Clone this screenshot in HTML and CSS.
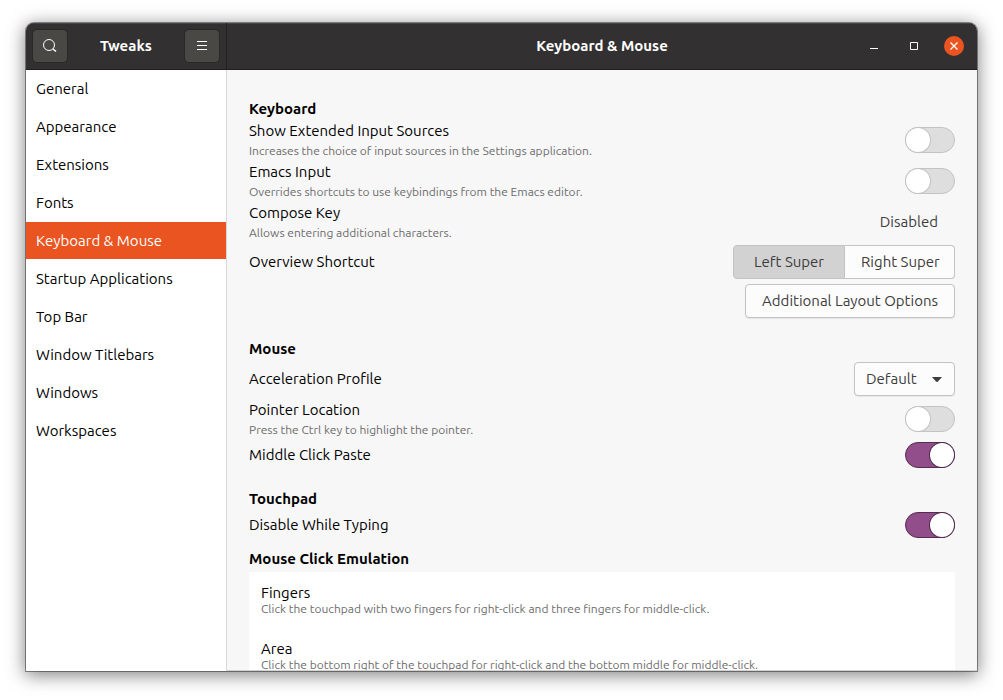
FILE: index.html
```html
<!DOCTYPE html>
<html lang="en">
<head>
<meta charset="utf-8">
<title>Tweaks</title>
<link rel="stylesheet" href="styles.css">
</head>
<body>
<div class="window">
  <header class="titlebar">
    <div class="titlebar-side">
      <button class="tool" type="button" aria-label="Search">
        <svg width="16" height="16" viewBox="0 0 16 16" fill="none" stroke="currentColor"><circle cx="7" cy="7" r="5.5"/><path d="M11 11l3 2.5" stroke-width="1.6"/></svg>
      </button>
      <h1 class="title">Tweaks</h1>
      <button class="tool" type="button" aria-label="Menu">
        <svg width="16" height="16" viewBox="0 0 16 16" fill="none" stroke="currentColor"><path d="M3 3.5h10M3 7.5h10M3 11.5h10"/></svg>
      </button>
    </div>
    <div class="titlebar-main">
      <h2 class="title">Keyboard &amp; Mouse</h2>
      <div class="window-controls">
        <button class="control" type="button" aria-label="Minimize"><svg width="20" height="20" viewBox="0 0 20 20"><path d="M6 12.5h8" stroke="#fff"/></svg></button>
        <button class="control" type="button" aria-label="Maximize"><svg width="20" height="20" viewBox="0 0 20 20"><path d="M6.5 6.5h7v7h-7z" fill="none" stroke="#fff"/></svg></button>
        <button class="control control-close" type="button" aria-label="Close"><svg width="20" height="20" viewBox="0 0 20 20"><path d="M6.5 6.5l7 7M13.5 6.5l-7 7" stroke="#fff" stroke-width="1.3"/></svg></button>
      </div>
    </div>
  </header>
  <div class="body">
    <nav class="sidebar">
      <a class="nav-item" href="#general">General</a>
      <a class="nav-item" href="#appearance">Appearance</a>
      <a class="nav-item" href="#extensions">Extensions</a>
      <a class="nav-item" href="#fonts">Fonts</a>
      <a class="nav-item nav-item-active" href="#keyboard" aria-current="page">Keyboard &amp; Mouse</a>
      <a class="nav-item" href="#startup">Startup Applications</a>
      <a class="nav-item" href="#topbar">Top Bar</a>
      <a class="nav-item" href="#titlebars">Window Titlebars</a>
      <a class="nav-item" href="#windows">Windows</a>
      <a class="nav-item" href="#workspaces">Workspaces</a>
    </nav>
    <main class="content">
      <section class="group">
        <h3 class="heading">Keyboard</h3>
        <div class="row">
          <label class="text" for="sources"><span class="name">Show Extended Input Sources</span><span class="hint">Increases the choice of input sources in the Settings application.</span></label>
          <input class="switch" type="checkbox" role="switch" id="sources">
        </div>
        <div class="row">
          <label class="text" for="emacs"><span class="name">Emacs Input</span><span class="hint">Overrides shortcuts to use keybindings from the Emacs editor.</span></label>
          <input class="switch" type="checkbox" role="switch" id="emacs">
        </div>
        <div class="row">
          <label class="text" for="compose"><span class="name">Compose Key</span><span class="hint">Allows entering additional characters.</span></label>
          <button class="button button-flat" type="button" id="compose">Disabled</button>
        </div>
        <div class="row">
          <span class="name" id="overview">Overview Shortcut</span>
          <div class="segments" role="group" aria-labelledby="overview">
            <button class="button segment segment-active" type="button" aria-pressed="true">Left Super</button>
            <button class="button segment" type="button" aria-pressed="false">Right Super</button>
          </div>
        </div>
        <div class="row row-end">
          <button class="button button-wide" type="button">Additional Layout Options</button>
        </div>
      </section>
      <section class="group">
        <h3 class="heading">Mouse</h3>
        <div class="row">
          <label class="name" for="profile">Acceleration Profile</label>
          <div class="dropdown">
            <select class="select" id="profile"><option>Default</option><option>Adaptive</option><option>Flat</option></select>
            <svg class="arrow" width="10" height="5" viewBox="0 0 10 5"><path d="M0 0h10L6 4.5Q5 5.3 4 4.5z" fill="#3d3d3d"/></svg>
          </div>
        </div>
        <div class="row">
          <label class="text" for="pointer"><span class="name">Pointer Location</span><span class="hint">Press the Ctrl key to highlight the pointer.</span></label>
          <input class="switch" type="checkbox" role="switch" id="pointer">
        </div>
        <div class="row">
          <label class="name" for="paste">Middle Click Paste</label>
          <input class="switch" type="checkbox" role="switch" id="paste" checked>
        </div>
      </section>
      <section class="group">
        <h3 class="heading">Touchpad</h3>
        <div class="row">
          <label class="name" for="typing">Disable While Typing</label>
          <input class="switch" type="checkbox" role="switch" id="typing" checked>
        </div>
        <h3 class="heading heading-list">Mouse Click Emulation</h3>
        <ul class="options">
          <li class="option"><span class="name">Fingers</span><span class="hint">Click the touchpad with two fingers for right-click and three fingers for middle-click.</span></li>
          <li class="option"><span class="name">Area</span><span class="hint">Click the bottom right of the touchpad for right-click and the bottom middle for middle-click.</span></li>
        </ul>
      </section>
    </main>
  </div>
</div>
</body>
</html>
```
FILE: styles.css
```css
* { box-sizing: border-box; }

body {
  margin: 0;
  height: 100vh;
  padding: 23px 26px 29px;
  background: #fff;
  color: #000;
  font: 15px/18px Ubuntu, "Noto Sans", sans-serif;
  overflow: hidden;
}

h1, h2, h3, ul { margin: 0; padding: 0; }
button, select, input { margin: 0; font: inherit; color: inherit; }

.window {
  display: flex;
  flex-direction: column;
  height: 100%;
  border-radius: 8px 8px 0 0;
  box-shadow: 0 0 0 1px rgba(0, 0, 0, .4), 0 3px 18px 1px rgba(0, 0, 0, .5);
  overflow: hidden;
}

.titlebar {
  display: flex;
  flex: none;
  height: 47px;
  background: #323030;
  border-bottom: 1px solid #1f1e1e;
  box-shadow: inset 0 1px #454343;
  color: #fff;
}

.titlebar-side {
  display: flex;
  align-items: center;
  justify-content: space-between;
  width: 201px;
  padding: 0 6px;
  border-right: 1px solid #242323;
}

.title { font-size: 15px; line-height: 18px; font-weight: 700; }

.tool {
  display: grid;
  place-items: center;
  width: 36px;
  height: 34px;
  padding: 0;
  background: #494845;
  border: 1px solid #292828;
  border-radius: 5px;
}

.titlebar-main {
  display: grid;
  grid-template-columns: 1fr auto 1fr;
  align-items: center;
  flex: 1;
  padding: 0 13px;
}

.titlebar-main .title { grid-column: 2; }

.window-controls {
  display: flex;
  justify-content: flex-end;
  gap: 20px;
}

.control {
  display: grid;
  width: 20px;
  height: 20px;
  padding: 0;
  background: none;
  border: 0;
  border-radius: 50%;
}

.control-close { background: #e95420; }

.body { display: flex; flex: 1; min-height: 0; }

.sidebar {
  display: flex;
  flex-direction: column;
  gap: 1px;
  width: 201px;
  flex: none;
  background: #fff;
  border-right: 1px solid #d8d8d8;
}

.nav-item {
  display: flex;
  align-items: center;
  height: 37px;
  padding: 0 10px;
  color: #000;
  text-decoration: none;
}

.nav-item-active { background: #e95420; color: #fff; }

.content {
  flex: 1;
  min-width: 0;
  display: flex;
  flex-direction: column;
  gap: 21px;
  padding: 29px 22px 0;
  background: #f7f7f7;
  border-bottom: 1px solid #d2d2d2;
  overflow: hidden;
}

.group { display: flex; flex-direction: column; gap: 5px; }

.heading {
  margin-bottom: -2px;
  font-size: 15px;
  line-height: 20px;
  font-weight: 700;
}

.heading-list { margin-top: 6px; }

.row {
  display: flex;
  align-items: center;
  justify-content: space-between;
}

.row-end { justify-content: flex-end; }

.text {
  display: flex;
  flex-direction: column;
  gap: 2px;
  margin-bottom: -2px;
}

.hint { font-size: 12px; color: #6c6c6c; }

.button {
  height: 34px;
  padding: 0 16px;
  background: #fcfcfc;
  border: 1px solid #c3c3c3;
  border-radius: 4px;
  color: #3d3d3d;
  white-space: nowrap;
}

.button-flat { background: none; border-color: transparent; }
.button-wide { box-shadow: 0 1px 1px rgba(0, 0, 0, .08); }

.segments {
  display: grid;
  grid-template-columns: 1fr 110px;
  width: 222px;
}

.segment { border-radius: 0 4px 4px 0; border-left-width: 0; }
.segment-active {
  border-left-width: 1px;
  border-radius: 4px 0 0 4px;
  background: #d2d2d2;
}

.dropdown {
  display: grid;
  grid-template-columns: 1fr;
  align-items: center;
  width: 101px;
}

.select {
  grid-area: 1 / 1;
  appearance: none;
  width: 101px;
  height: 34px;
  padding: 0 28px 0 11px;
  background: #fcfcfc;
  border: 1px solid #c3c3c3;
  border-radius: 4px;
  box-shadow: 0 1px 1px rgba(0, 0, 0, .06);
  color: #3d3d3d;
}

.arrow {
  grid-area: 1 / 1;
  justify-self: end;
  margin-right: 13px;
  pointer-events: none;
}

.switch {
  appearance: none;
  display: flex;
  flex: none;
  width: 50px;
  height: 26px;
  background: #dedede;
  border: 1px solid #c3c3c3;
  border-radius: 13px;
}

.switch::before {
  content: "";
  width: 24px;
  height: 24px;
  border-radius: 50%;
  background: #fff;
  box-shadow: 0 0 0 1px #c3c3c3;
}

.switch:checked {
  justify-content: flex-end;
  background: #924d8b;
  border-color: #532c50;
}

.switch:checked::before { box-shadow: 0 0 0 1px #532c50; }

.options { list-style: none; background: #fff; }

.option {
  display: flex;
  flex-direction: column;
  justify-content: center;
  height: 56px;
  padding: 2px 12px 0;
  line-height: 16px;
}
```
